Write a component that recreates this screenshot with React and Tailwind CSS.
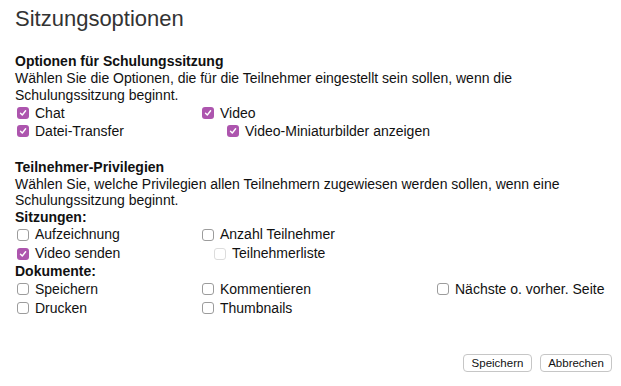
import React from "react";

const Box = ({ checked, disabled }) => {
  if (checked) {
    return (
      <span className="flex h-[12px] w-[12px] shrink-0 items-center justify-center rounded-[3px] bg-[#ad55ae]">
        <svg width="8" height="8" viewBox="0 0 8 8" fill="none">
          <path d="M1.5 4.2 L3.3 6 L6.6 1.8" stroke="#fff" strokeWidth="1.4" strokeLinecap="round" strokeLinejoin="round" />
        </svg>
      </span>
    );
  }
  return (
    <span
      className={`h-[12px] w-[12px] shrink-0 rounded-[3px] border bg-white ${
        disabled ? "border-[#dcdcdc]" : "border-[#9c9c9c]"
      }`}
    />
  );
};

const Check = ({ label, checked, disabled, indent = "", h = "h-[18px]" }) => (
  <div className={`flex items-center gap-[6px] ${h} ${indent}`}>
    <Box checked={checked} disabled={disabled} />
    <span className="whitespace-nowrap">{label}</span>
  </div>
);

export default function App() {
  return (
    <div
      className="h-[386px] w-[621px] bg-white text-[14px] text-[#111]"
      style={{ fontFamily: '"Liberation Sans", Arial, sans-serif' }}
    >
      <div className="px-[15px] pt-[6px]">
        <h1 className="text-[22px] leading-[26px] text-[#333]">Sitzungsoptionen</h1>

        {/* Optionen */}
        <div className="mt-[21px]">
          <div className="font-bold leading-[17px]">Optionen für Schulungssitzung</div>
          <p className="leading-[17px]">
            Wählen Sie die Optionen, die für die Teilnehmer eingestellt sein sollen, wenn die
            <br />
            Schulungssitzung beginnt.
          </p>
          <div className="grid grid-cols-[185px_1fr] pl-[2px]">
            <Check label="Chat" checked />
            <Check label="Video" checked />
            <Check label="Datei-Transfer" checked />
            <Check label="Video-Miniaturbilder anzeigen" checked indent="pl-[25px]" />
          </div>
        </div>

        {/* Privilegien */}
        <div className="mt-[19px] leading-[16.5px]">
          <div className="font-bold">Teilnehmer-Privilegien</div>
          <p>
            Wählen Sie, welche Privilegien allen Teilnehmern zugewiesen werden sollen, wenn eine
            <br />
            Schulungssitzung beginnt.
          </p>
          <div className="font-bold">Sitzungen:</div>
          <div className="grid grid-cols-[185px_1fr] pl-[2px]">
            <Check label="Aufzeichnung" h="h-[19px]" />
            <Check label="Anzahl Teilnehmer" h="h-[19px]" />
            <Check label="Video senden" checked h="h-[19px]" />
            <Check label="Teilnehmerliste" disabled indent="pl-[12px]" h="h-[19px]" />
          </div>
          <div className="font-bold">Dokumente:</div>
          <div className="grid grid-cols-[185px_235px_1fr] pl-[2px]">
            <Check label="Speichern" h="h-[19px]" />
            <Check label="Kommentieren" h="h-[19px]" />
            <Check label="Nächste o. vorher. Seite" h="h-[19px]" />
            <Check label="Drucken" h="h-[19px]" />
            <Check label="Thumbnails" h="h-[19px]" />
          </div>
        </div>
      </div>

      <div className="mt-[36px] flex justify-end gap-[8px] pr-[9px]">
        <button className="h-[18px] w-[69px] rounded-[4px] border border-[#c6c6c6] bg-white text-center text-[11.5px] leading-[16px] text-[#111]">
          Speichern
        </button>
        <button className="h-[18px] w-[72px] rounded-[4px] border border-[#c6c6c6] bg-white text-center text-[11.5px] leading-[16px] text-[#111]">
          Abbrechen
        </button>
      </div>
    </div>
  );
}
